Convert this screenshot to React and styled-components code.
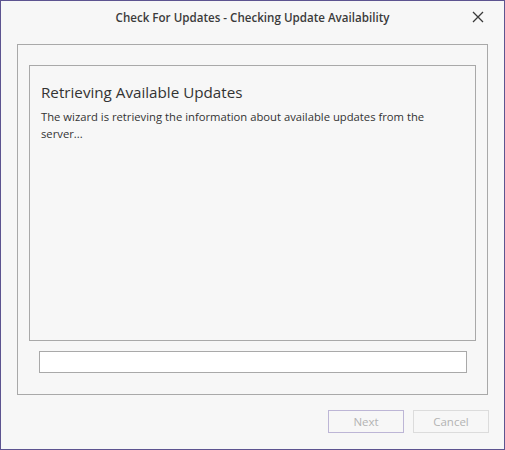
import React from "react";
import styled, { createGlobalStyle } from "styled-components";

const GlobalStyle = createGlobalStyle`
  html, body {
    margin: 0;
    padding: 0;
    background: #f7f7f7;
  }

  * {
    box-sizing: border-box;
  }
`;

const Window = styled.div`
  width: 505px;
  height: 450px;
  display: flex;
  flex-direction: column;
  background: #f7f7f7;
  border: 1px solid #5d5490;
  font-family: "Open Sans", "Noto Sans", sans-serif;
  color: #333333;
`;

const TitleBar = styled.div`
  height: 33px;
  display: grid;
  grid-template-columns: 1fr auto 1fr;
  align-items: center;
  padding-bottom: 1px;
`;

const Title = styled.div`
  grid-column: 2;
  font-size: 11.6px;
  font-weight: 600;
  color: #3b3b3b;
  white-space: nowrap;
`;

const CloseButton = styled.button`
  grid-column: 3;
  justify-self: end;
  width: 30px;
  height: 30px;
  margin-right: 11px;
  padding: 0;
  border: none;
  background: transparent;
  display: flex;
  align-items: center;
  justify-content: center;
`;

const Content = styled.div`
  padding: 10px 16px 0 16px;
`;

const GroupBox = styled.div`
  height: 351px;
  border: 1px solid #a9a9a9;
  padding: 20px 11px 21px;
  display: flex;
  flex-direction: column;
`;

const PagePanel = styled.div`
  flex: 1;
  border: 1px solid #a9a9a9;
  padding: 15px 11px;
`;

const Heading = styled.div`
  font-size: 15.2px;
  font-weight: 400;
  color: #333333;
  line-height: 22px;
  margin-bottom: 5px;
`;

const Description = styled.div`
  font-size: 11.25px;
  line-height: 17px;
  color: #333333;
`;

const ProgressBar = styled.div`
  height: 22px;
  margin: 10px 9px 0 10px;
  border: 1px solid #a9a9a9;
  background: #ffffff;
`;

const Footer = styled.div`
  display: flex;
  justify-content: flex-end;
  gap: 9px;
  padding: 15px 15px 0 0;
`;

const Button = styled.button`
  width: 76px;
  height: 23px;
  padding: 0;
  font-family: inherit;
  font-size: 11.5px;
  color: #b3b3b3;
  background: #f7f7f7;
  border: 1px solid ${(p) => (p.$focused ? "#bdb6d6" : "#dcdcdc")};
`;

export default function App() {
  return (
    <>
      <GlobalStyle />
      <Window>
        <TitleBar>
          <Title>Check For Updates - Checking Update Availability</Title>
          <CloseButton aria-label="Close">
            <svg width="12" height="12" viewBox="0 0 12 12">
              <path
                d="M1 1 L11 11 M11 1 L1 11"
                stroke="#3a3a3a"
                strokeWidth="1.3"
                fill="none"
              />
            </svg>
          </CloseButton>
        </TitleBar>
        <Content>
          <GroupBox>
            <PagePanel>
              <Heading>Retrieving Available Updates</Heading>
              <Description>
                The wizard is retrieving the information about available
                updates from the server...
              </Description>
            </PagePanel>
            <ProgressBar />
          </GroupBox>
        </Content>
        <Footer>
          <Button $focused disabled>
            Next
          </Button>
          <Button disabled>Cancel</Button>
        </Footer>
      </Window>
    </>
  );
}
